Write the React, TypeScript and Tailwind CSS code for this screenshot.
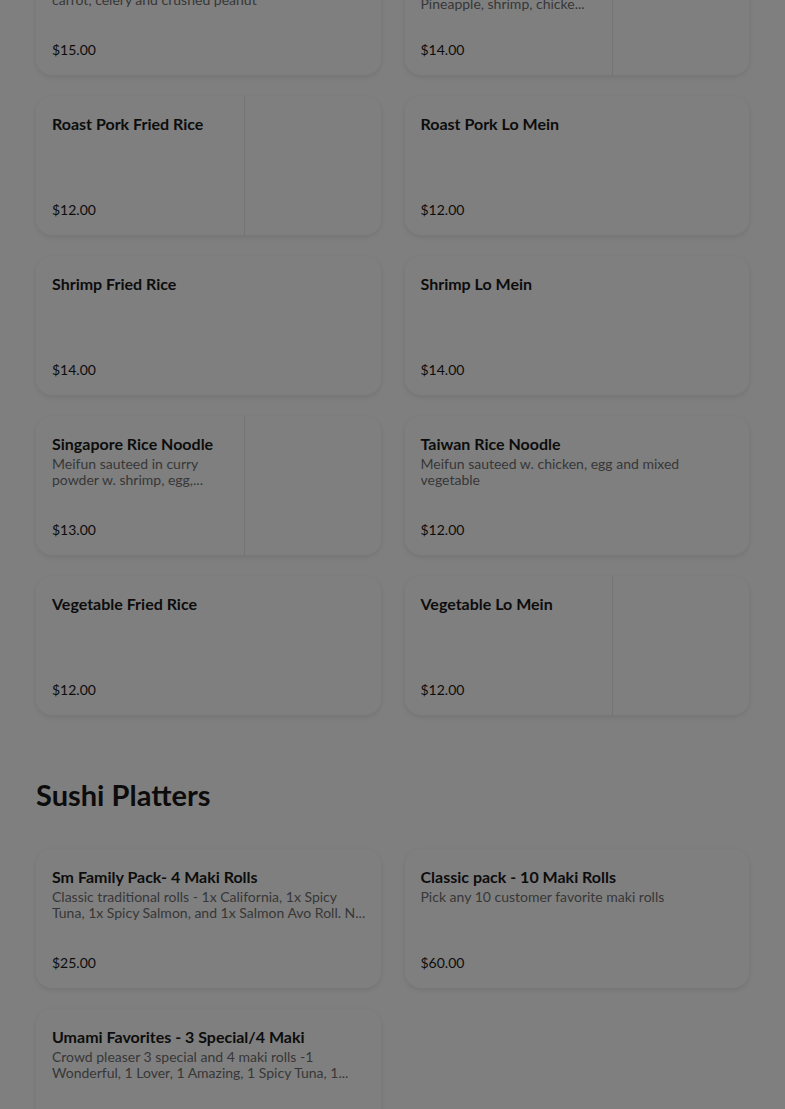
import React from "react";

type Item = {
  title: string;
  lines?: string[];
  price: string;
  image?: boolean;
  shift?: boolean;
};

const noodles: Item[] = [
  {
    title: "Pad Thai",
    lines: ["Rice noodle w. chicken, shrimp, egg, bean sprout,", "carrot, celery and crushed peanut"],
    price: "$15.00",
  },
  {
    title: "Pineapple Fried Rice",
    lines: ["Fried rice w. curry flavor, raisin,", "Pineapple, shrimp, chicke..."],
    price: "$14.00",
    image: true,
    shift: true,
  },
  { title: "Roast Pork Fried Rice", price: "$12.00", image: true },
  { title: "Roast Pork Lo Mein", price: "$12.00" },
  { title: "Shrimp Fried Rice", price: "$14.00" },
  { title: "Shrimp Lo Mein", price: "$14.00" },
  {
    title: "Singapore Rice Noodle",
    lines: ["Meifun sauteed in curry", "powder w. shrimp, egg,..."],
    price: "$13.00",
    image: true,
  },
  {
    title: "Taiwan Rice Noodle",
    lines: ["Meifun sauteed w. chicken, egg and mixed", "vegetable"],
    price: "$12.00",
  },
  { title: "Vegetable Fried Rice", price: "$12.00" },
  { title: "Vegetable Lo Mein", price: "$12.00", image: true },
];

const sushi: Item[] = [
  {
    title: "Sm Family Pack- 4 Maki Rolls",
    lines: [
      "Classic traditional rolls - 1x California, 1x Spicy",
      "Tuna, 1x Spicy Salmon, and 1x Salmon Avo Roll. N...",
    ],
    price: "$25.00",
  },
  {
    title: "Classic pack - 10 Maki Rolls",
    lines: ["Pick any 10 customer favorite maki rolls"],
    price: "$60.00",
  },
  {
    title: "Umami Favorites - 3 Special/4 Maki",
    lines: ["Crowd pleaser 3 special and 4 maki rolls -1", "Wonderful, 1 Lover, 1 Amazing, 1 Spicy Tuna, 1..."],
    price: "$55.00",
  },
];

function Card({ item }: { item: Item }) {
  return (
    <div className="flex h-[139px] overflow-hidden rounded-2xl bg-white shadow-[0_2px_6px_rgba(0,0,0,0.1)]">
      <div className="flex min-w-0 flex-1 flex-col justify-between px-4 pt-4 pb-[15px]">
        <div className={item.shift ? "pt-1" : ""}>
          <div className="text-[16px] font-bold leading-6 text-[#191919]">{item.title}</div>
          {item.lines && (
            <div className="text-[14px] leading-4 text-[#6f6f6f]">
              {item.lines.map((l, i) => (
                <div key={i} className="overflow-hidden whitespace-nowrap">
                  {l}
                </div>
              ))}
            </div>
          )}
        </div>
        <div className="text-[14px] leading-5 text-[#191919]">{item.price}</div>
      </div>
      {item.image && <div className="w-[137px] shrink-0 border-l border-[#e8e8e8] bg-white" />}
    </div>
  );
}

export default function App() {
  return (
    <div
      className="relative min-h-screen overflow-hidden bg-white"
      style={{ fontFamily: "Lato, 'Noto Sans', sans-serif" }}
    >
      <div className="-mt-[64px] px-9">
        <div className="grid grid-cols-2 gap-x-6 gap-y-[21px]">
          {noodles.map((it, i) => (
            <Card key={i} item={it} />
          ))}
        </div>
        <h2 className="mt-[56px] mb-[30px] text-[29px] font-bold leading-[48px] text-[#191919]">Sushi Platters</h2>
        <div className="grid grid-cols-2 gap-x-6 gap-y-[21px]">
          {sushi.map((it, i) => (
            <Card key={i} item={it} />
          ))}
        </div>
        <div className="h-20" />
      </div>
      <div className="fixed inset-0 bg-black/50" />
    </div>
  );
}
